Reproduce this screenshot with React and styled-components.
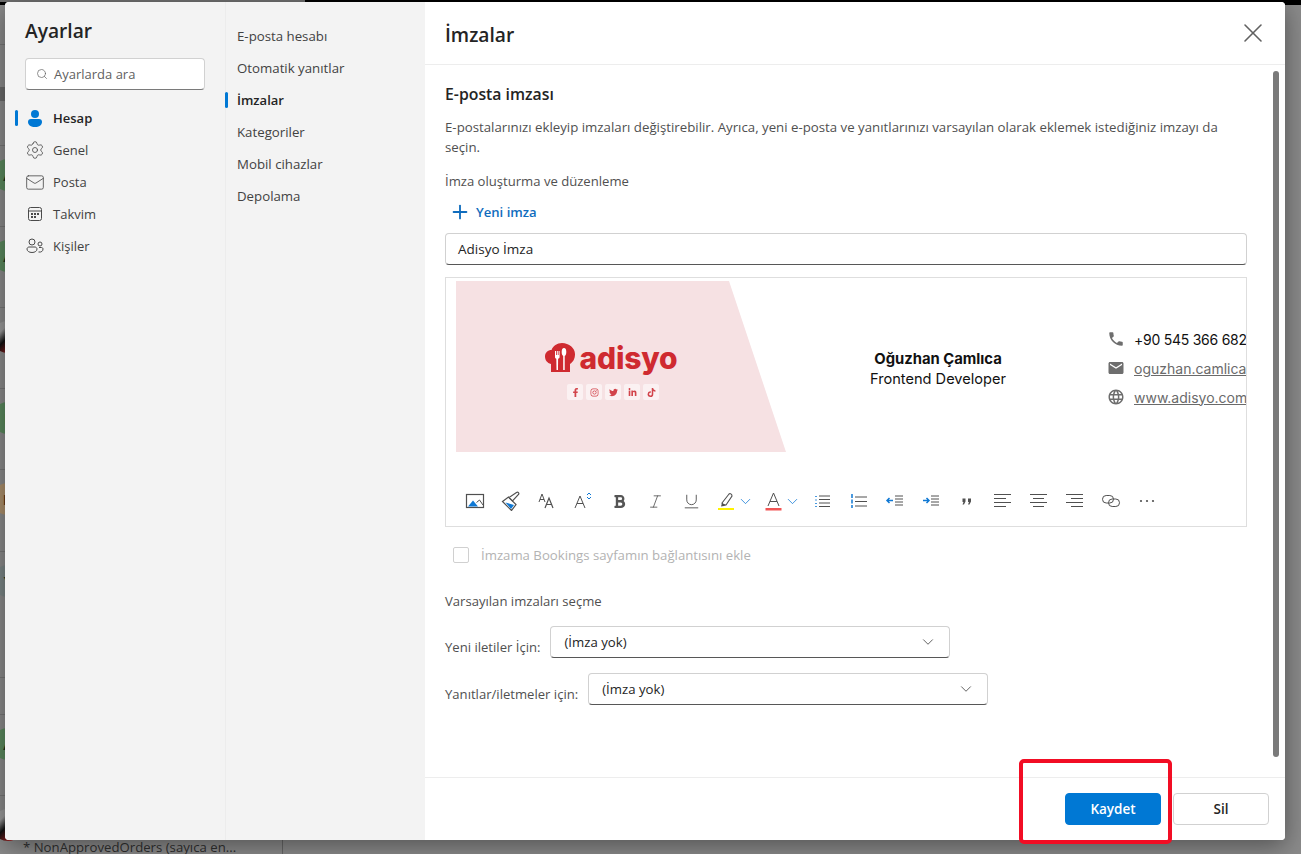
import React from 'react';
import styled, { createGlobalStyle } from 'styled-components';
import { Search, Settings, Mail, X, Plus, ChevronDown, Italic, Underline } from 'lucide-react';
import { FaBold, FaFacebookF, FaInstagram, FaTwitter, FaLinkedinIn, FaTiktok } from 'react-icons/fa';
import { MdPhone, MdEmail, MdLanguage } from 'react-icons/md';

const GlobalStyle = createGlobalStyle`
  html, body {
    margin: 0;
    padding: 0;
    background: #808080;
  }
  * {
    box-sizing: border-box;
  }
`;

const font = `"Open Sans", "Noto Sans", "Liberation Sans", sans-serif`;

const Page = styled.div`
  position: relative;
  width: 1301px;
  height: 854px;
  overflow: hidden;
  background: #8a8a8a;
  font-family: ${font};
  color: #424242;
`;

/* dimmed mail app behind the dialog */
const Behind = styled.div`
  display: flex;
  flex-direction: column;
  height: 100%;
`;

const TopBar = styled.div`
  flex: none;
  height: 5px;
  background: #000;
`;

const TopGrey = styled.div`
  width: 305px;
  height: 2px;
  background: #6f6f6f;
`;

const BehindBody = styled.div`
  flex: 1;
  display: flex;
  min-height: 0;
`;

const MailList = styled.div`
  flex: none;
  width: 283px;
  display: flex;
  flex-direction: column;
  border-right: 1px solid #666;
`;

const MailRow = styled.div`
  flex: none;
  height: ${(p) => p.$h}px;
  padding-top: 13px;
  border-bottom: 1px solid ${(p) => (p.$line === false ? 'transparent' : '#767676')};
  background: ${(p) => (p.$dark ? '#6a6a6a' : 'transparent')};
`;

const Avatar = styled.div`
  width: 32px;
  height: 32px;
  margin-left: -8px;
  border-radius: 50%;
  display: flex;
  align-items: center;
  justify-content: center;
  background: ${(p) => p.$bg};
  color: ${(p) => p.$fg || '#14301a'};
  font-size: 14px;
  font-weight: 600;
`;

const Orders = styled.div`
  position: absolute;
  left: 23px;
  bottom: 0;
  font-size: 13.2px;
  line-height: 14px;
  color: #2f2f2f;
  white-space: nowrap;
`;

const Dialog = styled.div`
  position: absolute;
  left: 5px;
  top: 2px;
  width: 1280px;
  height: 838px;
  display: flex;
  border-radius: 4px;
  overflow: hidden;
  background: #fff;
  box-shadow: 0 6px 24px rgba(0, 0, 0, 0.4);
`;

const Gutter = styled.div`
  flex: none;
  width: 20px;
`;

const NavPane = styled.nav`
  flex: none;
  width: 220px;
  background: #f3f3f3;
  display: flex;
`;

const NavInner = styled.div`
  flex: 1;
  padding-right: 20px;
`;

const SettingsTitle = styled.h1`
  margin: 15px 0 13px;
  font-size: 19.2px;
  line-height: 28px;
  font-weight: 600;
  color: #242424;
`;

const SearchBox = styled.div`
  height: 32px;
  display: flex;
  align-items: center;
  gap: 6px;
  padding-left: 10px;
  background: #fff;
  border: 1px solid #d1d1d1;
  border-bottom-color: #7a7a7a;
  border-radius: 4px;
  font-size: 13px;
  color: #5f5f5f;
`;

const NavList = styled.ul`
  list-style: none;
  margin: 12px 0 0 -10px;
  padding: 0;
`;

const NavItem = styled.li`
  position: relative;
  height: 32px;
  display: flex;
  align-items: center;
  gap: 8px;
  padding-left: 10px;
  font-size: 13px;
  font-weight: ${(p) => (p.$active ? 600 : 400)};
  color: ${(p) => (p.$active ? '#242424' : '#424242')};
`;

const NavIcon = styled.span`
  width: 20px;
  height: 20px;
  flex: none;
  display: flex;
  align-items: center;
  justify-content: center;
  color: #4a4a4a;
`;

const Marker = styled.span`
  position: absolute;
  left: ${(p) => p.$left}px;
  top: 8px;
  width: 3px;
  height: 16px;
  border-radius: 2px;
  background: #0078d4;
`;

const SubPane = styled.div`
  flex: none;
  width: 200px;
  padding-top: 18px;
  background: #f3f3f3;
  border-left: 1px solid #ececec;
`;

const SubItem = styled.div`
  position: relative;
  height: 32px;
  display: flex;
  align-items: center;
  padding-left: 11px;
  font-size: ${(p) => (p.$active ? 13 : 13.25)}px;
  font-weight: ${(p) => (p.$active ? 600 : 400)};
  color: ${(p) => (p.$active ? '#242424' : '#424242')};
`;

const Main = styled.main`
  position: relative;
  flex: 1;
  min-width: 0;
  display: flex;
  flex-direction: column;
  background: #fff;
`;

const Header = styled.header`
  flex: none;
  height: 63px;
  display: flex;
  align-items: center;
  justify-content: space-between;
  padding: 0 16px 0 20px;
  border-bottom: 1px solid #ededed;
`;

const HeaderTitle = styled.h2`
  margin: 2px 0 0;
  font-size: 19.2px;
  font-weight: 600;
  color: #242424;
`;

const CloseIcon = styled(X)`
  color: #616161;
`;

const Body = styled.div`
  flex: 1;
  min-height: 0;
  padding: 18px 38px 0 20px;
`;

const SectionTitle = styled.h3`
  margin: 0;
  font-size: 15.8px;
  line-height: 22px;
  font-weight: 600;
  color: #242424;
`;

const Paragraph = styled.p`
  margin: 12px 0 0;
  font-size: 13.25px;
  line-height: 20px;
  color: #505050;
`;

const Label = styled.div`
  margin-top: ${(p) => p.$top}px;
  font-size: 13.1px;
  line-height: 20px;
  color: #505050;
`;

const AddLink = styled.div`
  margin: 5px 0 0 4px;
  height: 32px;
  display: flex;
  align-items: center;
  gap: 5px;
  font-size: 13.1px;
  font-weight: 600;
  color: #0f6cbd;
`;

const NameInput = styled.div`
  height: 32px;
  margin-top: 5px;
  display: flex;
  align-items: center;
  padding-left: 12px;
  border: 1px solid #d1d1d1;
  border-bottom-color: #575757;
  border-radius: 4px;
  font-size: 13.5px;
  color: #242424;
`;

const Editor = styled.div`
  height: 250px;
  margin-top: 12px;
  border: 1px solid #dedede;
  overflow: hidden;
`;

const Signature = styled.div`
  display: flex;
  height: 198px;
  padding: 3px 0 0 10px;
`;

const Banner = styled.div`
  flex: none;
  width: 330px;
  height: 171px;
  padding: 60px 20px 0 0;
  display: flex;
  flex-direction: column;
  align-items: center;
  background: #f6e1e3;
  clip-path: polygon(0 0, 273px 0, 100% 100%, 0 100%);
`;

const Logo = styled.div`
  display: flex;
  align-items: center;
  gap: 4px;
  height: 34px;
`;

const LogoText = styled.span`
  font-family: Inter, "Liberation Sans", sans-serif;
  font-size: 30px;
  line-height: 30px;
  font-weight: 800;
  letter-spacing: -0.2px;
  color: #cf2a30;
`;

const Socials = styled.div`
  display: flex;
  gap: 3px;
  margin: 9px 0 0 4px;
`;

const Social = styled.span`
  width: 16px;
  height: 16px;
  display: flex;
  align-items: center;
  justify-content: center;
  border-radius: 2px;
  background: rgba(255, 255, 255, 0.55);
  color: #d2444b;
  font-size: 9px;
`;

const Person = styled.div`
  flex: none;
  width: 304px;
  padding-top: 68px;
  text-align: center;
  font-family: Inter, Roboto, sans-serif;
  font-size: 14.6px;
  line-height: 20px;
  color: #111;
`;

const PersonName = styled.div`
  font-size: 14.8px;
  font-weight: 700;
`;

const Contacts = styled.div`
  flex: none;
  padding: 48px 0 0 17px;
  display: flex;
  flex-direction: column;
  gap: 9px;
`;

const ContactRow = styled.div`
  height: 20px;
  display: flex;
  align-items: center;
  gap: 9px;
  font-family: Inter, Roboto, sans-serif;
  font-size: 14px;
  white-space: nowrap;
  letter-spacing: ${(p) => (p.$link ? 0 : -0.25)}px;
  color: ${(p) => (p.$link ? '#6a6a6a' : '#111')};
  text-decoration: ${(p) => (p.$link ? 'underline' : 'none')};
  svg {
    flex: none;
    color: #6e6e6e;
    font-size: 18px;
  }
`;

const Toolbar = styled.div`
  display: flex;
  align-items: center;
  padding-left: 11px;
  height: 50px;
`;

const ToolButton = styled.span`
  flex: none;
  width: ${(p) => p.$w || 36}px;
  height: 36px;
  display: flex;
  align-items: center;
  justify-content: ${(p) => (p.$w ? 'flex-start' : 'center')};
  padding-left: ${(p) => (p.$w ? 8 : 0)}px;
  color: #555;
`;

const BookingsRow = styled.div`
  margin-top: 18px;
  margin-left: 8px;
  height: 20px;
  display: flex;
  align-items: center;
  gap: 12px;
  font-size: 13.2px;
  color: #b3b3b3;
`;

const Checkbox = styled.span`
  width: 16px;
  height: 16px;
  border: 1px solid #d0d0d0;
  border-radius: 2px;
`;

const SelectRow = styled.div`
  display: flex;
  align-items: center;
  gap: 10px;
  margin-top: ${(p) => p.$top}px;
  font-size: 13.1px;
  color: #505050;
`;

const RowLabel = styled.span`
  padding-top: 9px;
`;

const Select = styled.div`
  width: 400px;
  height: 32px;
  display: flex;
  align-items: center;
  justify-content: space-between;
  padding: 0 12px 0 13px;
  border: 1px solid #d1d1d1;
  border-bottom-color: #575757;
  border-radius: 4px;
  font-size: 13.2px;
  color: #242424;
`;

const Footer = styled.footer`
  flex: none;
  height: 63px;
  display: flex;
  justify-content: flex-end;
  align-items: flex-start;
  gap: 12px;
  padding: 15px 16px 0 0;
  border-top: 1px solid #ededed;
`;

const Button = styled.button`
  width: 96px;
  height: 32px;
  border-radius: 4px;
  font-family: ${font};
  font-size: 13.5px;
  font-weight: 600;
  cursor: pointer;
  color: ${(p) => (p.$primary ? '#fff' : '#242424')};
  background: ${(p) => (p.$primary ? '#0078d4' : '#fff')};
  border: 1px solid ${(p) => (p.$primary ? '#0078d4' : '#d1d1d1')};
`;

const Scrollbar = styled.div`
  position: absolute;
  right: 6px;
  top: 69px;
  width: 6px;
  height: 686px;
  border-radius: 3px;
  background: #7a7a7a;
`;

const Highlight = styled.div`
  position: absolute;
  left: 1019px;
  top: 759px;
  width: 153px;
  height: 85px;
  border: 4px solid #f20d24;
  border-radius: 5px;
  pointer-events: none;
`;

const blue = '#0f78d4';
const ink = '#505050';

const Svg = ({ children, w = 20, h = 20 }) => (
  <svg width={w} height={h} viewBox={`0 0 ${w} ${h}`} fill="none" stroke={ink} strokeWidth="1">
    {children}
  </svg>
);

const PersonIcon = () => (
  <svg width="16" height="18" viewBox="0 0 16 18" fill="#0078d4">
    <circle cx="8" cy="5" r="4" />
    <path d="M1 13c0-2 1-3 3-3h8c2 0 3 1 3 3 0 3-3 5-7 5s-7-2-7-5z" />
  </svg>
);

const CalendarIcon = () => (
  <svg width="16" height="16" viewBox="0 0 16 16" fill="none" stroke="#4a4a4a">
    <rect x="1.5" y="1.5" width="13" height="13" rx="2" />
    <path d="M1.5 5h13" />
    <g fill="#4a4a4a" stroke="none">
      <rect x="4" y="7" width="2" height="2" />
      <rect x="7" y="7" width="2" height="2" />
      <rect x="10" y="7" width="2" height="2" />
      <rect x="4" y="10" width="2" height="2" />
      <rect x="7" y="10" width="2" height="2" />
    </g>
  </svg>
);

const PeopleIcon = () => (
  <svg width="18" height="16" viewBox="0 0 18 16" fill="none" stroke="#4a4a4a">
    <circle cx="6" cy="4" r="3" />
    <circle cx="14" cy="6" r="2" />
    <path d="M1 11c0-1 1-2 2-2h6c1 0 2 1 2 2 0 2-2 3.500-5 3.500S1 13 1 11z" />
    <path d="M12.500 14c3 .5 4.500-1 4.500-3 0-1-.8-1.500-1.500-1.500H13" />
  </svg>
);

const HatIcon = () => (
  <svg width="31" height="30" viewBox="0 0 31 30">
    <path
      fill="#cf2a30"
      d="M6 29V21C2 20 0 17 0 13.500 0 9.500 3 7 6.500 7 8 3 12 0 17 0c7 0 13 5 13 11 0 5-2 8-5 10v8z"
    />
    <g fill="#fff">
      <ellipse cx="19" cy="9" rx="2.300" ry="4" />
      <rect x="18.200" y="11" width="1.500" height="16" />
      <path d="M10 8h1v4h.8V8h1v4h.8V8h1v6c0 1-.8 1.500-1.500 1.700L13 27h-1.500l-.2-11.300C10.600 15.500 10 15 10 14z" />
    </g>
  </svg>
);

const ImageIcon = () => (
  <Svg>
    <rect x="1.500" y="3.500" width="17" height="13" strokeWidth="1.200" />
    <path d="M3 15.500l5-6 5 6z" fill={blue} stroke="none" />
    <path d="M11.500 11.500l3-2.500 3.500 5" />
  </Svg>
);

const BrushIcon = () => (
  <Svg>
    <path d="M1.500 10.500l6-4.500 7.500 7.500-4.500 6z" strokeWidth="1.200" />
    <path d="M4.500 11.500l8.500 2.500-3 4z" fill={blue} stroke="none" />
    <path d="M8 6.500l3.500 3.500 6-6.500c1-1.500-.5-3-2-2z" fill="#fff" strokeWidth="1.200" />
  </Svg>
);

const FontSizeIcon = () => (
  <Svg>
    <path d="M2 11l3-8 3 8M3 8.500h4" />
    <path d="M8 17l4-10 4 10M9.500 13.500h5" strokeWidth="1.200" />
  </Svg>
);

const FontChangeIcon = () => (
  <Svg>
    <path d="M2 17l5-12 5 12M4 12.500h6" />
    <path d="M14 4l2-2 2 2M14 6l2 2 2-2" stroke={blue} />
  </Svg>
);

const HighlightIcon = () => (
  <Svg>
    <path d="M5 12l7-9c1-1 3 0 3 2l-6 9H6z" strokeWidth="1.100" />
    <path d="M5 12l4 2-2 1-3 .5z" fill={ink} stroke="none" />
    <rect x="1" y="17" width="16" height="2" fill="#fff200" stroke="none" />
  </Svg>
);

const TextColorIcon = () => (
  <Svg>
    <path d="M4 15L9.500 2 15 15M6 10.500h7" />
    <rect x="1.500" y="17" width="16" height="2.500" fill="#f15454" stroke="none" />
  </Svg>
);

const Caret = () => <ChevronDown size={17} color={blue} strokeWidth={1.1} />;

const BulletIcon = () => (
  <Svg>
    <path d="M6 5h11M6 8.500h11M6 12h11M6 15.500h11" />
    <path d="M3 5v1M3 8.500v1M3 12v1M3 15v1" stroke={blue} strokeWidth="1.500" />
  </Svg>
);

const NumberIcon = () => (
  <Svg>
    <path d="M6 6h12M6 10.500h12M6 15h12" />
    <path d="M3 3v4M3 8.500v4M3 14v3" stroke={blue} strokeWidth="1.500" />
  </Svg>
);

const OutdentIcon = () => (
  <Svg>
    <path d="M10 5h8M10 8h8M10 11h8M10 14h8" />
    <path d="M8 9.500H2M4.500 7L2 9.500 4.500 12" stroke={blue} strokeWidth="1.500" />
  </Svg>
);

const IndentIcon = () => (
  <Svg>
    <path d="M10 5h8M10 8h8M10 11h8M10 14h8" />
    <path d="M2 9.500h6M5.500 7L8 9.500 5.500 12" stroke={blue} strokeWidth="1.500" />
  </Svg>
);

const QuoteIcon = () => (
  <Svg>
    <path d="M5.500 7.500h3v3l-1.500 3H5.500l1-2.500h-1zM11 7.500h3v3l-1.500 3H11l1-2.500h-1z" fill={ink} stroke="none" />
  </Svg>
);

const AlignIcon = ({ kind }) => {
  const rows = kind === 'left'
    ? ['M1 3.500h17', 'M1 7.500h12', 'M1 11.500h17', 'M1 15.500h12']
    : kind === 'center'
      ? ['M1 3.500h17', 'M4 7.500h11', 'M1 11.500h17', 'M4 15.500h11']
      : ['M1 3.500h17', 'M6 7.500h12', 'M1 11.500h17', 'M6 15.500h12'];
  return (
    <Svg>
      {rows.map((d) => (
        <path key={d} d={d} />
      ))}
    </Svg>
  );
};

const LinkIcon = () => (
  <Svg>
    <rect x="1.500" y="4.500" width="11" height="7.500" rx="3.700" />
    <rect x="7.500" y="8" width="11" height="7.500" rx="3.700" />
  </Svg>
);

const MoreIcon = () => (
  <Svg>
    <g fill={ink} stroke="none">
      <circle cx="4" cy="10" r="1.100" />
      <circle cx="10" cy="10" r="1.100" />
      <circle cx="16" cy="10" r="1.100" />
    </g>
  </Svg>
);

const photo = 'linear-gradient(135deg, #999 30%, #111 50%, #a22 80%)';

const mailRows = [
  { h: 40 },
  { h: 42, line: false },
  { h: 6, dark: true, line: false },
  { h: 45 },
  { h: 81, bg: '#5b8a5e', text: 'A' },
  { h: 81, bg: '#5b8a5e', text: 'A' },
  { h: 81, bg: photo },
  { h: 81, bg: '#5b8a5e', text: 'E' },
  { h: 82, bg: '#ab8f6b', text: 'D', fg: '#4a3318' },
  { h: 126, bg: '#7b8686', text: 'Y' },
  { h: 37 },
  { h: 81, bg: '#5b8a5e', text: 'A' },
  { h: 66, bg: photo, line: false },
];

const navItems = [
  { label: 'Hesap', icon: <PersonIcon />, active: true },
  { label: 'Genel', icon: <Settings size={20} strokeWidth={1} /> },
  { label: 'Posta', icon: <Mail size={21} strokeWidth={1} /> },
  { label: 'Takvim', icon: <CalendarIcon /> },
  { label: 'Kişiler', icon: <PeopleIcon /> },
];

const subItems = ['E-posta hesabı', 'Otomatik yanıtlar', 'İmzalar', 'Kategoriler', 'Mobil cihazlar', 'Depolama'];

const App = () => (
  <Page>
    <GlobalStyle />
    <Behind>
      <TopBar>
        <TopGrey />
      </TopBar>
      <BehindBody>
        <MailList>
          {mailRows.map((row, i) => (
            <MailRow key={i} $h={row.h} $dark={row.dark} $line={row.line}>
              {row.bg && (
                <Avatar $bg={row.bg} $fg={row.fg}>
                  {row.text}
                </Avatar>
              )}
            </MailRow>
          ))}
        </MailList>
      </BehindBody>
    </Behind>
    <Orders>* NonApprovedOrders (sayıca en...</Orders>

    <Dialog>
      <NavPane>
        <Gutter />
        <NavInner>
          <SettingsTitle>Ayarlar</SettingsTitle>
          <SearchBox>
            <Search size={12} strokeWidth={1.4} color="#616161" />
            Ayarlarda ara
          </SearchBox>
          <NavList>
            {navItems.map((item) => (
              <NavItem key={item.label} $active={item.active}>
                {item.active && <Marker $left={0} />}
                <NavIcon>{item.icon}</NavIcon>
                {item.label}
              </NavItem>
            ))}
          </NavList>
        </NavInner>
      </NavPane>

      <SubPane>
        {subItems.map((label) => (
          <SubItem key={label} $active={label === 'İmzalar'}>
            {label === 'İmzalar' && <Marker $left={-1} />}
            {label}
          </SubItem>
        ))}
      </SubPane>

      <Main>
        <Header>
          <HeaderTitle>İmzalar</HeaderTitle>
          <CloseIcon size={32} strokeWidth={1.2} />
        </Header>
        <Body>
          <SectionTitle>E-posta imzası</SectionTitle>
          <Paragraph>
            E-postalarınızı ekleyip imzaları değiştirebilir. Ayrıca, yeni e-posta ve yanıtlarınızı varsayılan olarak eklemek istediğiniz imzayı da seçin.
          </Paragraph>
          <Label $top={14}>İmza oluşturma ve düzenleme</Label>
          <AddLink>
            <Plus size={22} strokeWidth={2} color="#0f6cbd" />
            Yeni imza
          </AddLink>
          <NameInput>Adisyo İmza</NameInput>
          <Editor>
            <Signature>
              <Banner>
                <Logo>
                  <HatIcon />
                  <LogoText>adisyo</LogoText>
                </Logo>
                <Socials>
                  <Social><FaFacebookF /></Social>
                  <Social><FaInstagram /></Social>
                  <Social><FaTwitter /></Social>
                  <Social><FaLinkedinIn /></Social>
                  <Social><FaTiktok /></Social>
                </Socials>
              </Banner>
              <Person>
                <PersonName>Oğuzhan Çamlıca</PersonName>
                Frontend Developer
              </Person>
              <Contacts>
                <ContactRow><MdPhone />+90 545 366 6822</ContactRow>
                <ContactRow $link><MdEmail />oguzhan.camlica@adisyo.com</ContactRow>
                <ContactRow $link><MdLanguage />www.adisyo.com</ContactRow>
              </Contacts>
            </Signature>
            <Toolbar>
              <ToolButton><ImageIcon /></ToolButton>
              <ToolButton><BrushIcon /></ToolButton>
              <ToolButton><FontSizeIcon /></ToolButton>
              <ToolButton><FontChangeIcon /></ToolButton>
              <ToolButton><FaBold size={15} /></ToolButton>
              <ToolButton><Italic size={17} strokeWidth={1.2} /></ToolButton>
              <ToolButton><Underline size={19} strokeWidth={1.2} /></ToolButton>
              <ToolButton $w={47}><HighlightIcon /><Caret /></ToolButton>
              <ToolButton $w={49}><TextColorIcon /><Caret /></ToolButton>
              <ToolButton><BulletIcon /></ToolButton>
              <ToolButton><NumberIcon /></ToolButton>
              <ToolButton><OutdentIcon /></ToolButton>
              <ToolButton><IndentIcon /></ToolButton>
              <ToolButton><QuoteIcon /></ToolButton>
              <ToolButton><AlignIcon kind="left" /></ToolButton>
              <ToolButton><AlignIcon kind="center" /></ToolButton>
              <ToolButton><AlignIcon kind="right" /></ToolButton>
              <ToolButton><LinkIcon /></ToolButton>
              <ToolButton><MoreIcon /></ToolButton>
            </Toolbar>
          </Editor>
          <BookingsRow>
            <Checkbox />
            İmzama Bookings sayfamın bağlantısını ekle
          </BookingsRow>
          <Label $top={26}>Varsayılan imzaları seçme</Label>
          <SelectRow $top={15}>
            <RowLabel>Yeni iletiler İçin:</RowLabel>
            <Select>
              (İmza yok)
              <ChevronDown size={18} strokeWidth={1.1} color="#424242" />
            </Select>
          </SelectRow>
          <SelectRow $top={15}>
            <RowLabel>Yanıtlar/iletmeler için:</RowLabel>
            <Select>
              (İmza yok)
              <ChevronDown size={18} strokeWidth={1.1} color="#424242" />
            </Select>
          </SelectRow>
        </Body>
        <Footer>
          <Button $primary>Kaydet</Button>
          <Button>Sil</Button>
        </Footer>
        <Scrollbar />
      </Main>
    </Dialog>
    <Highlight />
  </Page>
);

export default App;
